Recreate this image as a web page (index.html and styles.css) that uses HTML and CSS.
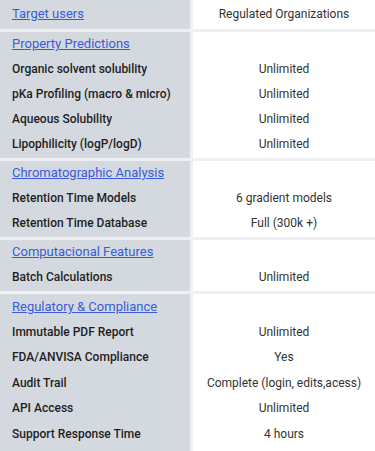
FILE: index.html
```html
<!DOCTYPE html>
<html lang="en">
<head>
    <meta charset="UTF-8">
    <meta name="viewport" content="width=device-width, initial-scale=1.0">
    <title>Plan features</title>
    <link rel="stylesheet" href="styles.css">
</head>
<body>
    <table class="plan-table">
        <tbody class="group first">
            <tr>
                <td class="feature title"><a href="#">Target users</a></td>
                <td class="value">Regulated Organizations</td>
            </tr>
        </tbody>
        <tbody class="group">
            <tr>
                <td class="feature title"><a href="#">Property Predictions</a></td>
                <td class="value"></td>
            </tr>
            <tr><td class="feature">Organic solvent solubility</td><td class="value">Unlimited</td></tr>
            <tr><td class="feature">pKa Profiling (macro &amp; micro)</td><td class="value">Unlimited</td></tr>
            <tr><td class="feature">Aqueous Solubility</td><td class="value">Unlimited</td></tr>
            <tr><td class="feature">Lipophilicity (logP/logD)</td><td class="value">Unlimited</td></tr>
        </tbody>
        <tbody class="group">
            <tr>
                <td class="feature title"><a href="#">Chromatographic Analysis</a></td>
                <td class="value"></td>
            </tr>
            <tr><td class="feature">Retention Time Models</td><td class="value">6 gradient models</td></tr>
            <tr><td class="feature">Retention Time Database</td><td class="value">Full (300k +)</td></tr>
        </tbody>
        <tbody class="group">
            <tr>
                <td class="feature title"><a href="#">Computacional Features</a></td>
                <td class="value"></td>
            </tr>
            <tr><td class="feature">Batch Calculations</td><td class="value">Unlimited</td></tr>
        </tbody>
        <tbody class="group last">
            <tr>
                <td class="feature title"><a href="#">Regulatory &amp; Compliance</a></td>
                <td class="value"></td>
            </tr>
            <tr><td class="feature">Immutable PDF Report</td><td class="value">Unlimited</td></tr>
            <tr><td class="feature">FDA/ANVISA Compliance</td><td class="value">Yes</td></tr>
            <tr><td class="feature">Audit Trail</td><td class="value">Complete (login, edits,acess)</td></tr>
            <tr><td class="feature">API Access</td><td class="value">Unlimited</td></tr>
            <tr><td class="feature">Support Response Time</td><td class="value">4 hours</td></tr>
        </tbody>
    </table>
</body>
</html>
```

FILE: styles.css
```css
*{
    margin: 0;
    padding: 0;
}
html, body{
    height: 100%;
    overflow: hidden;
}
body{
    background: #fff;
    font-family: Roboto, "Noto Sans", sans-serif;
    color: #222;
}
.plan-table{
    width: 100%;
    border-collapse: separate;
    border-spacing: 0;
}
.plan-table td{
    height: 25px;
    padding: 0 12px;
    font-size: 12px;
    line-height: 25px;
    vertical-align: top;
    white-space: nowrap;
}
/* light rule between groups */
.group tr:first-child td{
    border-top: 3px solid #eef0f4;
}
.group.first tr:first-child td{
    border-top: none;
    height: 29px;
    line-height: 28px;
}
.group tr:last-child td{
    height: 26px;
}
.group.last td{
    height: 25.5px;
    line-height: 25.5px;
}
.group.last tr:last-child td{
    height: 40px;
}
.feature{
    width: 166px;
    background: #d4d9e0;
    border-right: 3px solid #eef0f4;
    font-weight: 500;
    color: #1e1e1e;
}
.value{
    text-align: center;
    color: #333;
}
.feature.title{
    font-size: 13px;
    line-height: 23px;
}
.group.last .feature.title{
    line-height: 25px;
}
.title a{
    color: #3a5bd9;
    font-weight: 400;
    text-decoration: underline;
}
```
